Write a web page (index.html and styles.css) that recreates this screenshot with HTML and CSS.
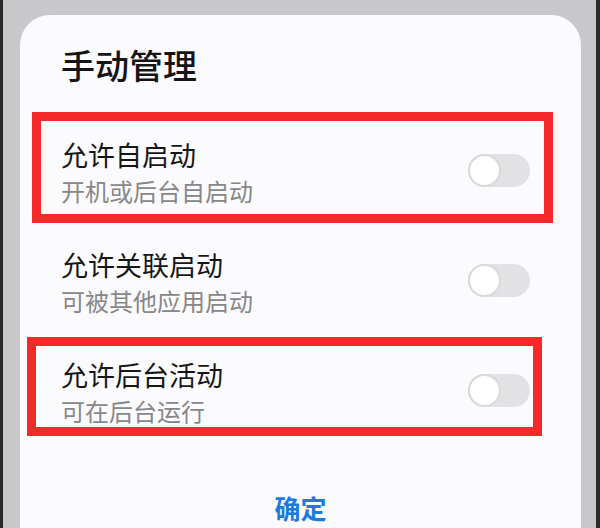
FILE: index.html
```html
<!DOCTYPE html>
<html lang="zh-CN">
<head>
<meta charset="utf-8">
<title>手动管理</title>
<link rel="stylesheet" href="styles.css">
</head>
<body>
<div class="frame">
  <div class="card">
    <h1 class="title">手动管理</h1>
    <div class="list">
      <div class="row">
        <div class="text">
          <div class="name">允许自启动</div>
          <div class="desc">开机或后台自启动</div>
        </div>
        <span class="toggle"><span class="knob"></span></span>
      </div>
      <div class="row">
        <div class="text">
          <div class="name">允许关联启动</div>
          <div class="desc">可被其他应用启动</div>
        </div>
        <span class="toggle"><span class="knob"></span></span>
      </div>
      <div class="row">
        <div class="text">
          <div class="name">允许后台活动</div>
          <div class="desc">可在后台运行</div>
        </div>
        <span class="toggle"><span class="knob"></span></span>
      </div>
    </div>
    <div class="actions"><span class="ok">确定</span></div>
    <div class="mark mark-1"></div>
    <div class="mark mark-2"></div>
  </div>
</div>
</body>
</html>
```
FILE: styles.css
```css
html, body {
  margin: 0;
  padding: 0;
  height: 100%;
  overflow: hidden;
}
body {
  background: #c8c8ca;
  font-family: "Noto Sans CJK SC", "Noto Sans", sans-serif;
}
.frame {
  box-sizing: border-box;
  height: 528px;
  overflow: hidden;
  border-left: 3px solid #2a2a2b;
  border-right: 4px solid #2a2a2b;
  padding: 15px 15px 0 17px;
}
.card {
  position: relative;
  box-sizing: border-box;
  background: #fbfafd;
  border-radius: 30px 30px 0 0;
  height: 513px;
  padding: 30px 51px 0 41px;
}
.title {
  margin: 0;
  font-size: 34px;
  line-height: 40px;
  font-weight: 500;
  color: #141414;
}
.list {
  margin-top: 32px;
}
.row {
  height: 110px;
  display: flex;
  align-items: center;
  justify-content: space-between;
}
.text {
  display: flex;
  flex-direction: column;
  gap: 3px;
}
.name {
  font-size: 27px;
  line-height: 34px;
  color: #161616;
}
.desc {
  font-size: 24px;
  line-height: 32px;
  color: #878789;
}
.toggle {
  position: relative;
  width: 62px;
  height: 33px;
  border-radius: 17px;
  background: #e2e2e4;
  margin-top: -3px;
}
.knob {
  position: absolute;
  left: 0;
  top: 0;
  box-sizing: border-box;
  width: 33px;
  height: 33px;
  border-radius: 50%;
  background: #ffffff;
  border: 2px solid #d9d9db;
}
.actions {
  display: flex;
  justify-content: center;
  margin-top: 45px;
  padding-left: 10px;
}
.ok {
  font-size: 26px;
  line-height: 32px;
  font-weight: 700;
  color: #1b7bdc;
}
.mark {
  position: absolute;
  box-sizing: border-box;
  border: 9px solid #f42a2a;
}
.mark-1 {
  left: 12px;
  top: 97px;
  width: 521px;
  height: 111px;
}
.mark-2 {
  left: 7px;
  top: 322px;
  width: 515px;
  height: 99px;
}
```
